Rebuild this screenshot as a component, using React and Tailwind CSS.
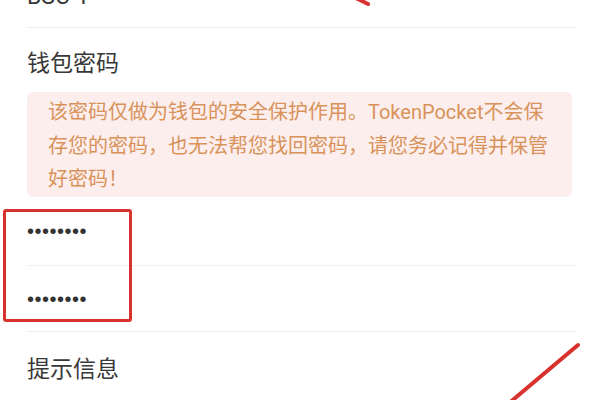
export default function App() {
    const font = { fontFamily: 'Roboto, "Noto Sans CJK SC", "Noto Sans", sans-serif' };

    return (
        <div className="relative w-[600px] h-[400px] overflow-hidden bg-white text-[#383838]" style={font}>
            <div className="flow-root pl-[27px] pr-[24px]">
                {/* previous field, cut off at the top */}
                <div className="flow-root h-[28px] border-b border-[#f1f1f1]">
                    <div className="-mt-[18px] text-[23px] leading-[30px]">BSC-1</div>
                </div>

                <div className="pt-[21px] text-[23px] leading-[30px]">钱包密码</div>

                <div className="mt-[13px] h-[105px] w-[545px] rounded-[6px] bg-[#fdeeee] px-[21px] pt-[4px] text-[20px] leading-[33.5px] text-[#d8935a]">
                    <div className="whitespace-nowrap">该密码仅做为钱包的安全保护作用。TokenPocket不会保</div>
                    <div className="whitespace-nowrap">存您的密码，也无法帮您找回密码，请您务必记得并保管</div>
                    <div className="whitespace-nowrap">好密码！</div>
                </div>

                <div className="flex h-[69px] items-center border-b border-[#f1f1f1]">
                    <span className="text-[20px] tracking-[0.5px] text-[#333333]" style={{ fontFamily: '"Liberation Sans", sans-serif' }}>••••••••</span>
                </div>
                <div className="flex h-[66px] items-center border-b border-[#f1f1f1]">
                    <span className="text-[20px] tracking-[0.5px] text-[#333333]" style={{ fontFamily: '"Liberation Sans", sans-serif' }}>••••••••</span>
                </div>

                <div className="pt-[23px] text-[23px] leading-[30px]">提示信息</div>
            </div>

            {/* red annotation marks drawn over the screenshot */}
            <div className="absolute left-[3px] top-[209px] h-[113px] w-[129px] rounded-[3px] border-[3px] border-[#d8322f]" />
            <svg className="pointer-events-none absolute left-0 top-0" width="600" height="400">
                <line x1="352" y1="-4" x2="368" y2="4" stroke="#d8322f" strokeWidth="4" strokeLinecap="round" />
                <line x1="578" y1="345" x2="508" y2="404" stroke="#d8322f" strokeWidth="4" strokeLinecap="round" />
            </svg>
        </div>
    );
}
